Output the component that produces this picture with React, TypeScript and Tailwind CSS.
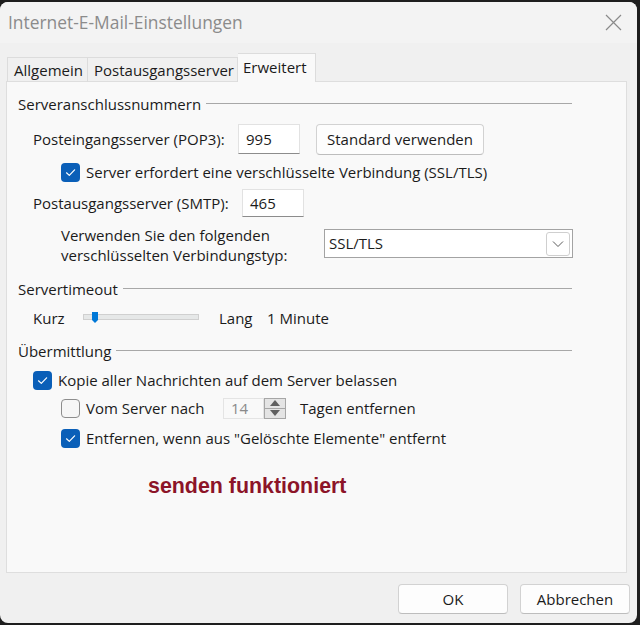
import React from "react";

function Check({ checked }: { checked: boolean }) {
  if (checked) {
    return (
      <span className="w-[19px] h-[19px] rounded-[4px] bg-[#0a5fb8] flex items-center justify-center shrink-0">
        <svg width="19" height="19" viewBox="0 0 19 19">
          <path d="M5.5 9.8 L8.3 12.4 L13.6 6.8" fill="none" stroke="#ffffff" strokeWidth="1.2" strokeLinecap="round" strokeLinejoin="round" />
        </svg>
      </span>
    );
  }
  return <span className="w-[19px] h-[19px] rounded-[4px] border border-[#8d8d8d] bg-[#f6f6f6] shrink-0" />;
}

function Header({ text, mt }: { text: string; mt: string }) {
  return (
    <div className={`flex items-center h-[20px] w-[554px] ${mt}`}>
      <span className="whitespace-nowrap">{text}</span>
      <span className="flex-1 h-px bg-[#a8a8a8] ml-[5px] -mt-[2px]" />
    </div>
  );
}

export default function App() {
  return (
    <div className="w-[640px] h-[625px] bg-[#1e1e1e] overflow-hidden font-['Open_Sans',sans-serif] text-[15px] text-[#1b1b1b]">
      <div className="mt-[2px] w-[637px] h-[621px] rounded-[8px] bg-[#f0f0f0] flex flex-col overflow-hidden">
        {/* title bar */}
        <div className="h-[41px] bg-[#f3f3f3] flex items-center justify-between pl-[8px] pr-[15px] shrink-0">
          <span className="text-[17.4px] text-[#8b8b8b]">Internet-E-Mail-Einstellungen</span>
          <svg width="17" height="17" viewBox="0 0 17 17">
            <path d="M1 1 L16 16 M16 1 L1 16" stroke="#8a8a8a" strokeWidth="1.2" />
          </svg>
        </div>

        {/* tabs */}
        <div className="flex items-end h-[28px] mt-[11px] ml-[7px] relative z-10 -mb-px whitespace-nowrap">
          <div className="h-[25px] px-[6px] border border-[#dcdcdc] border-b-0 flex items-center w-[81px]">Allgemein</div>
          <div className="h-[25px] px-[6px] border border-[#dcdcdc] border-l-0 border-b-0 flex items-center w-[150px]">Postausgangsserver</div>
          <div className="h-[29px] px-[5px] border border-[#dcdcdc] border-l-0 border-b-0 bg-[#f9f9f9] flex items-center w-[78px] pb-[2px]">Erweitert</div>
        </div>

        {/* panel */}
        <div className="ml-[6px] w-[621px] h-[492px] border border-[#dedede] bg-[#f9f9f9] shrink-0 flex flex-col pl-[11px] whitespace-nowrap">
          <Header text="Serveranschlussnummern" mt="mt-[12px]" />

          <div className="flex items-center h-[32px] mt-[9px] ml-[15px]">
            <span className="w-[205px]">Posteingangsserver (POP3):</span>
            <div className="w-[62px] h-[30px] bg-white border border-[#e2e2e2] border-b-[#8c8c8c] flex items-center pl-[7px]">995</div>
            <div className="ml-[16px] w-[168px] h-[31px] bg-[#fdfdfd] border border-[#d2d2d2] border-b-[#bdbdbd] rounded-[4px] flex items-center justify-center">Standard verwenden</div>
          </div>

          <div className="flex items-center h-[20px] mt-[7px] ml-[43px] gap-[6px]">
            <Check checked />
            <span>Server erfordert eine verschlüsselte Verbindung (SSL/TLS)</span>
          </div>

          <div className="flex items-center h-[30px] mt-[6px] ml-[15px]">
            <span className="w-[209px]">Postausgangsserver (SMTP):</span>
            <div className="w-[62px] h-[28px] bg-white border border-[#e2e2e2] border-b-[#8c8c8c] flex items-center pl-[7px]">465</div>
          </div>

          <div className="flex items-center h-[40px] mt-[7px] ml-[43px]">
            <div className="w-[263px] leading-[20px]">
              <div>Verwenden Sie den folgenden</div>
              <div>verschlüsselten Verbindungstyp:</div>
            </div>
            <div className="w-[249px] h-[29px] -mt-[3px] bg-white border border-[#a3a3a3] flex items-center justify-between pl-[4px] pr-[2px]">
              <span>SSL/TLS</span>
              <div className="w-[24px] h-[24px] border border-[#cfcfcf] rounded-[3px] flex items-center justify-center">
                <svg width="12" height="8" viewBox="0 0 12 8">
                  <path d="M1 1.5 L6 6.5 L11 1.5" fill="none" stroke="#5a5a5a" strokeWidth="1" />
                </svg>
              </div>
            </div>
          </div>

          <Header text="Servertimeout" mt="mt-[14px]" />

          <div className="flex items-center h-[20px] mt-[9px] ml-[15px]">
            <span className="w-[50px]">Kurz</span>
            <div className="relative w-[116px] h-[6px] bg-[#e6e8e8] border border-[#d0d0d0] -mt-[2px]">
              <svg className="absolute left-[8px] -top-[3px]" width="6" height="11" viewBox="0 0 6 11">
                <path d="M0 0 H6 V8 L3 11 L0 8 Z" fill="#0078d7" />
              </svg>
            </div>
            <span className="ml-[20px] w-[48px]">Lang</span>
            <span>1 Minute</span>
          </div>

          <Header text="Übermittlung" mt="mt-[13px]" />

          <div className="flex items-center h-[20px] mt-[9px] ml-[15px] gap-[6px]">
            <Check checked />
            <span>Kopie aller Nachrichten auf dem Server belassen</span>
          </div>

          <div className="flex items-center h-[22px] mt-[7px] ml-[43px]">
            <Check checked={false} />
            <span className="ml-[6px] w-[137px]">Vom Server nach</span>
            <div className="flex h-[21px]">
              <div className="w-[41px] h-[21px] border border-[#e4e4e4] bg-[#f9f9f9] flex items-center pl-[7px] text-[#8a8a8a]">14</div>
              <div className="w-[22px] h-[21px] border border-[#a6a6a6] bg-[#e4e4e4] flex flex-col">
                <div className="flex-1 flex items-center justify-center border-b border-[#a6a6a6]">
                  <svg width="10" height="6" viewBox="0 0 10 6"><path d="M0 6 L5 0 L10 6 Z" fill="#5f5f5f" /></svg>
                </div>
                <div className="flex-1 flex items-center justify-center">
                  <svg width="10" height="6" viewBox="0 0 10 6"><path d="M0 0 L5 6 L10 0 Z" fill="#5f5f5f" /></svg>
                </div>
              </div>
            </div>
            <span className="ml-[14px]">Tagen entfernen</span>
          </div>

          <div className="flex items-center h-[20px] mt-[9px] ml-[43px] gap-[6px]">
            <Check checked />
            <span>Entfernen, wenn aus "Gelöschte Elemente" entfernt</span>
          </div>

          <div className="flex items-center h-[20px] mt-[28px] ml-[130px]">
            <span className="font-['Liberation_Sans',Arial,sans-serif] font-bold text-[21.4px] text-[#8c1428]">senden funktioniert</span>
          </div>
        </div>

        {/* buttons */}
        <div className="flex justify-end gap-[12px] mt-[11px] pr-[7px]">
          <div className="w-[110px] h-[30px] bg-[#fdfdfd] border border-[#d2d2d2] border-b-[#bdbdbd] rounded-[4px] flex items-center justify-center">OK</div>
          <div className="w-[110px] h-[30px] bg-[#fdfdfd] border border-[#d2d2d2] border-b-[#bdbdbd] rounded-[4px] flex items-center justify-center">Abbrechen</div>
        </div>
      </div>
    </div>
  );
}
